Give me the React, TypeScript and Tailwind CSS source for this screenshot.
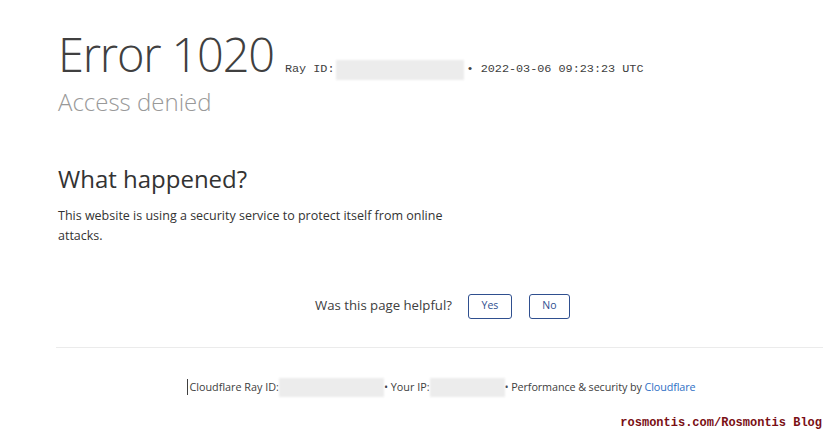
import React from "react";

const Blur = ({ className }: { className: string }) => (
  <span className={`inline-block bg-[#ececec] blur-[1px] align-middle ${className}`} />
);

const App = () => {
  return (
    <div className="relative w-[827px] h-[435px] overflow-hidden bg-white font-['Open_Sans',sans-serif] text-[#404040]">
      <div className="pl-[58px] pt-[30px]">
        <div className="flex items-baseline gap-[11px]">
          <h1 className="text-[47px] leading-[48px] font-light tracking-[-1.2px] text-[#404040]">Error 1020</h1>
          <div className="flex items-center font-['Liberation_Mono',monospace] text-[11.8px] text-[#404040]">
            <span>Ray ID:</span>
            <Blur className="w-[128px] h-[20px] mx-[2px]" />
            <span>• 2022-03-06 09:23:23 UTC</span>
          </div>
        </div>
        <h2 className="mt-[7px] text-[24px] leading-[30px] font-light text-[#999999]">Access denied</h2>

        <section className="mt-[46px] w-[400px]">
          <h2 className="text-[24px] leading-[32px] text-[#333333]">What happened?</h2>
          <p className="mt-[11px] text-[12.5px] leading-[20px] text-[#333333]">
            This website is using a security service to protect itself from online attacks.
          </p>
        </section>
      </div>

      <div className="mt-[48px] flex items-center justify-center gap-[16px] pl-[58px] text-[#404040]">
        <span className="text-[13.2px]">Was this page helpful?</span>
        <div className="flex gap-[17px]">
          <button className="w-[44px] h-[25px] rounded-[3px] border border-[#2f4f8f] text-[10.5px] text-[#2f4f8f]">Yes</button>
          <button className="w-[41px] h-[25px] rounded-[3px] border border-[#2f4f8f] text-[10.5px] text-[#2f4f8f]">No</button>
        </div>
      </div>

      <div className="ml-[56px] mr-[4px] mt-[28px] border-t border-[#ebebeb]" />

      <div className="mt-[30px] flex items-center justify-center pl-[56px] text-[10.8px] text-[#404040]">
        <span className="border-l border-[#404040] pl-[1px]">Cloudflare Ray ID:</span>
        <Blur className="w-[105px] h-[19px]" />
        <span>• Your IP:</span>
        <Blur className="w-[75px] h-[19px]" />
        <span className="tracking-[-0.1px]">• Performance &amp; security by <span className="text-[#2f6fc5]">Cloudflare</span></span>
      </div>

      <div className="absolute right-[5px] bottom-[3px] font-['Liberation_Mono',monospace] text-[12px] font-bold text-[#7a0f14]">
        rosmontis.com/Rosmontis Blog
      </div>
    </div>
  );
};

export default App;
